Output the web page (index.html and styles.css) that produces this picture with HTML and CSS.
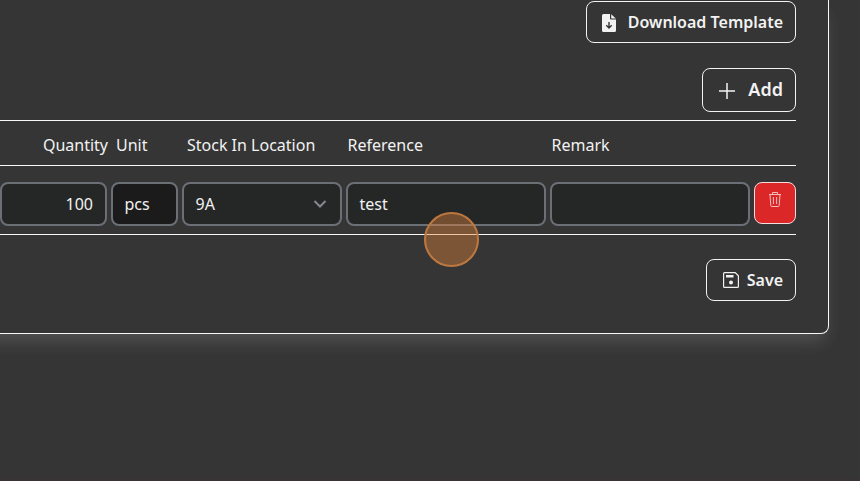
FILE: index.html
```html
<!DOCTYPE html>
<html lang="en">
<head>
<meta charset="utf-8">
<title>Stock In</title>
<link rel="stylesheet" href="styles.css">
</head>
<body>
<main class="card">
  <div class="actions">
    <button class="btn btn-download">
      <svg class="icon-file" width="14" height="18" viewBox="0 0 14 18"><path fill="currentColor" d="M1.500 0H8v4.500q0 1 1 1h5V16.500a1.500 1.500 0 0 1-1.500 1.500h-11A1.500 1.500 0 0 1 0 16.500v-15A1.500 1.500 0 0 1 1.500 0ZM9.200.2 13.800 4.500H9.200Z"/><path d="M7 8v5.500M4.300 11.200 7 13.900l2.700-2.700" fill="none" stroke="#353535" stroke-width="1.400"/></svg>
      Download Template
    </button>
  </div>
  <div class="actions">
    <button class="btn btn-add">
      <svg class="icon-plus" width="16" height="16" viewBox="0 0 16 16"><path d="M8 0v16M0 8h16" stroke="currentColor" stroke-width="1.500"/></svg>
      <span>Add</span>
    </button>
  </div>
  <div class="table">
    <div class="row head">
      <span class="right">Quantity</span><span>Unit</span><span>Stock In Location</span><span>Reference</span><span>Remark</span><span></span>
    </div>
    <div class="row body">
      <div class="field right">100</div>
      <div class="field disabled">pcs</div>
      <div class="field select">9A<svg width="14" height="8" viewBox="0 0 14 8"><path d="m1.500 1 5.500 5.500L12.500 1" fill="none" stroke="currentColor" stroke-width="2"/></svg></div>
      <div class="field">test</div>
      <div class="field"></div>
      <button class="delete" aria-label="Delete"><svg width="12" height="15" viewBox="0 0 12 15"><path d="M0 2.500h12M3.500 2.500v-2h5v2M1 2.500l.8 11.200q.1.800.900.800h6.600q.8 0 .900-.800L11 2.500M4.400 5v7M7.600 5v7" fill="none" stroke="currentColor" stroke-width="1"/></svg></button>
    </div>
  </div>
  <div class="actions">
    <button class="btn btn-save">
      <svg width="16" height="16" viewBox="0 0 16 16"><path d="M1.500.6h10.700l3.200 3.200v10.700q0 .9-.9.900h-13q-.9 0-.9-.9v-13q0-.9.900-.9Z" fill="none" stroke="currentColor" stroke-width="1.200"/><path d="M3 3h7.500v2.500H3Z" fill="currentColor"/><circle cx="8" cy="10.500" r="2" fill="currentColor"/></svg>
      Save
    </button>
  </div>
  <span class="click-marker"></span>
</main>
</body>
</html>
```
FILE: styles.css
```css
* { box-sizing: border-box; }
body {
  margin: 0;
  height: 481px;
  overflow: hidden;
  background: #353535;
  border-bottom: 2px solid #3a3335;
  color: #f2f2f2;
  font: 16px/24px "Noto Sans", sans-serif;
}
button { font-family: inherit; color: inherit; margin: 0; }
.card {
  position: relative;
  width: 869px;
  height: 334px;
  margin-left: -40px;
  padding: 1px 32px 0 40px;
  border: solid #f8f8f8;
  border-width: 0 1px 1px 0;
  border-bottom-right-radius: 8px;
  background: #353535;
  box-shadow: 0 10px 18px -4px rgba(255, 255, 255, .16);
}
.actions { display: flex; justify-content: flex-end; }
.btn {
  display: flex;
  align-items: center;
  height: 42px;
  padding: 0 12px;
  border: 1px solid #f2f2f2;
  border-radius: 8px;
  background: transparent;
  font-size: 16px;
  font-weight: 600;
  line-height: 24px;
  white-space: nowrap;
}
.btn svg { flex: none; }
.btn-download { width: 210px; justify-content: space-between; padding-left: 15px; }
.icon-file { margin-top: 2px; }
.btn-add {
  width: 94px;
  height: 44px;
  margin-top: 25px;
  padding-left: 16px;
  justify-content: space-between;
  font-size: 18px;
}
.btn-add span { margin-bottom: 2px; }
.icon-plus { margin-top: 2px; }
.btn-save { width: 90px; margin-top: 24px; padding-left: 16px; justify-content: space-between; }
.table { margin-top: 8px; border-top: 1px solid #f8f8f8; }
.row {
  display: grid;
  grid-template-columns: 107px 67px 160px 200px 200px 42px;
  column-gap: 4px;
  border-bottom: 1px solid #f8f8f8;
}
.head { height: 45px; padding-top: 4px; align-items: center; }
.head span { padding-left: 5px; white-space: nowrap; }
.head span:nth-child(n+4) { padding-left: 1.5px; }
.head .right { padding: 0; margin-right: -1px; }
.body { height: 69px; padding-top: 16px; align-items: start; }
.right { text-align: right; }
.field {
  height: 44px;
  padding: 8px 12px 8px 11.5px;
  border: 2px solid #6b6f76;
  border-radius: 8px;
  background: #252626;
}
.disabled { background: #1b1b1b; }
.select { display: flex; justify-content: space-between; align-items: center; padding-right: 13px; }
.select svg { color: #85888d; }
.delete {
  display: flex;
  justify-content: center;
  height: 42px;
  padding: 9px 0 0;
  border: 1px solid #f2dede;
  border-radius: 8px;
  background: #db2727;
  color: #f5bcbc;
}
.click-marker {
  position: absolute;
  left: 464px;
  top: 212px;
  width: 55px;
  height: 55px;
  border: 2px solid #bd783f;
  border-radius: 50%;
  background: rgba(223, 130, 60, .42);
}
```
